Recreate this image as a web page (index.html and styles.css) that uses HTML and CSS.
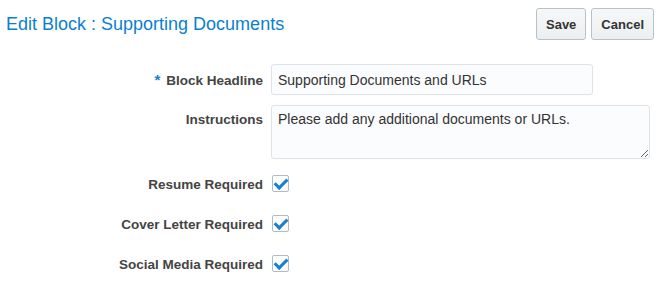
FILE: index.html
```html
<!DOCTYPE html>
<html lang="en">
  <head>
    <meta charset="UTF-8" />
    <title>Edit Block</title>
    <link rel="stylesheet" href="styles.css">
  </head>
  <body>
    <header class="page-header">
      <h1 class="title">Edit Block : Supporting Documents</h1>
      <div class="actions">
        <button type="button" class="btn">Save</button>
        <button type="button" class="btn">Cancel</button>
      </div>
    </header>

    <form class="form">
      <label class="label" for="headline"><span class="req">*</span> Block Headline</label>
      <div class="field">
        <input type="text" id="headline" class="input" value="Supporting Documents and URLs" />
      </div>

      <label class="label label-top" for="instructions">Instructions</label>
      <div class="field">
        <textarea id="instructions" class="textarea">Please add any additional documents or URLs.</textarea>
      </div>

      <label class="label">Resume Required</label>
      <div class="field"><span class="check"></span></div>

      <label class="label">Cover Letter Required</label>
      <div class="field"><span class="check"></span></div>

      <label class="label">Social Media Required</label>
      <div class="field"><span class="check"></span></div>
    </form>
  </body>
</html>
```

FILE: styles.css
```css
* {
  margin: 0;
  padding: 0;
  box-sizing: border-box;
}

body {
  font-family: "Liberation Sans", Arial, sans-serif;
  color: #333;
  background: #fff;
}

.page-header {
  display: flex;
  justify-content: space-between;
  align-items: center;
  padding: 8px 8px 0 6px;
}

.title {
  font-size: 18px;
  font-weight: normal;
  color: #0a7fcf;
}

.actions {
  display: flex;
  gap: 5px;
}

.btn {
  height: 32px;
  padding: 0 9px;
  font-family: inherit;
  font-size: 13px;
  font-weight: bold;
  color: #333;
  background: linear-gradient(#f6f7f8, #eceff1);
  border: 1px solid #b9c1c8;
  border-radius: 3px;
}

.form {
  display: grid;
  grid-template-columns: 263px 1fr;
  column-gap: 8px;
  row-gap: 10px;
  margin-top: 24px;
  padding-right: 12px;
}

.label {
  font-size: 13.5px;
  font-weight: bold;
  color: #444;
  text-align: right;
  align-self: center;
}

.label-top {
  align-self: start;
  padding-top: 7px;
}

.req {
  color: #1a7fd0;
  font-size: 15px;
  margin-right: 2px;
}

.input,
.textarea {
  display: block;
  font-family: inherit;
  font-size: 14px;
  color: #333;
  background: #fbfcfd;
  border: 1px solid #dfe3e7;
  border-radius: 3px;
  padding: 0 6px;
}

.input {
  width: 322px;
  height: 31px;
}

.textarea {
  width: 379px;
  height: 54px;
  padding-top: 5px;
  resize: vertical;
}

.field {
  min-height: 30px;
  display: flex;
  align-items: center;
}

.check {
  display: block;
  width: 17px;
  height: 17px;
  margin-left: 1px;
  margin-top: -2px;
  border: 1px solid #b3bcc4;
  border-radius: 2px;
  background: #fff;
  position: relative;
}

.check::after {
  content: "";
  position: absolute;
  left: 4px;
  top: 0px;
  width: 5px;
  height: 10px;
  border: solid #1a7fd0;
  border-width: 0 3px 3px 0;
  transform: rotate(45deg);
}
```
